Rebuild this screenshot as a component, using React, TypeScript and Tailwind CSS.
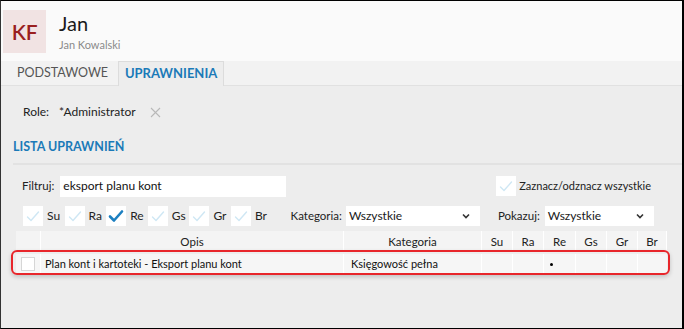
import React from "react";

const font = { fontFamily: 'Lato, "Noto Sans", sans-serif' };

function Check({ on }: { on?: boolean }) {
  return (
    <div className="w-[20px] h-[20px] bg-white flex items-center justify-center">
      <svg width="16" height="14" viewBox="0 0 16 14">
        <path
          d={on ? "M2 7.5 L6 11.5 L14 2.5" : "M2.5 8 L6 11.5 L13.5 3"}
          fill="none"
          stroke={on ? "#1c7fc0" : "#cfe7f4"}
          strokeWidth={on ? 2.6 : 1.4}
          strokeLinecap="round"
          strokeLinejoin="round"
        />
      </svg>
    </div>
  );
}

function Select({ w, value }: { w: string; value: string }) {
  return (
    <div className={`${w} h-[20px] bg-white flex items-center justify-between pl-[3px] pr-[10px] text-[12px] text-[#1a1a1a]`}>
      <span>{value}</span>
      <svg width="8" height="6" viewBox="0 0 8 6">
        <path d="M1 1.5 L4 4.5 L7 1.5" fill="none" stroke="#333" strokeWidth="1.6" />
      </svg>
    </div>
  );
}

const cols = "grid-cols-[25px_303px_138px_31px_31px_32px_31px_31px_29px]";

export default function App() {
  const perms = [
    { k: "Su", on: false },
    { k: "Ra", on: false },
    { k: "Re", on: true },
    { k: "Gs", on: false },
    { k: "Gr", on: false },
    { k: "Br", on: false },
  ];
  return (
    <div
      style={font}
      className="w-[684px] h-[329px] overflow-hidden border-t border-l border-b border-r-2 border-t-black border-b-black border-r-black border-l-[#333] bg-[#ededed] flex flex-col"
    >
      {/* Header */}
      <div className="h-[60px] bg-[#fafafa] flex items-start pl-[2px] pt-[9px] shrink-0">
        <div className="w-[43px] h-[43px] bg-[#f1e3e3] flex items-center justify-center text-[21px] text-[#9a1f1f] font-semibold tracking-[-0.3px]">
          KF
        </div>
        <div className="ml-[13px] flex flex-col">
          <div className="text-[20px] leading-[24px] text-[#1a1a1a] mt-[1px]">Jan</div>
          <div className="text-[11px] leading-[14px] text-[#8a8a8a] mt-[3px]">Jan Kowalski</div>
        </div>
      </div>

      {/* Tabs */}
      <div className="h-[25px] bg-[#f2f2f2] border-b border-[#e1e1e1] flex items-end pl-[5px] shrink-0">
        <div className="h-[24px] pl-[11px] pr-[10px] flex items-center text-[12.5px] text-[#555]">PODSTAWOWE</div>
        <div className="h-[25px] -mb-px w-[106px] justify-center bg-[#ededed] border border-b-0 border-[#dcdcdc] flex items-center text-[13px] font-bold text-[#1b7ab8]">
          UPRAWNIENIA
        </div>
      </div>

      {/* Role */}
      <div className="h-[52px] flex items-center pl-[22px] text-[12px] text-[#222] shrink-0">
        <span>Role:</span>
        <span className="ml-[10px]">*Administrator</span>
        <svg className="ml-[14px]" width="11" height="11" viewBox="0 0 11 11">
          <path d="M1 1 L10 10 M10 1 L1 10" stroke="#b8b8b8" strokeWidth="1.1" />
        </svg>
      </div>

      {/* Section title */}
      <div className="pl-[12px] text-[12.5px] font-bold text-[#1b7ab8] leading-[18px]">LISTA UPRAWNIEŃ</div>
      <div className="ml-[12px] mt-[7px] h-[2px] bg-[#e2e2e2]" />

      {/* Filter row */}
      <div className="mt-[10px] h-[22px] flex items-center pl-[21px] pr-[31px] text-[11px] text-[#222]">
        <span className="text-[11.5px]">Filtruj:</span>
        <div className="ml-[6px] w-[226px] h-[21px] bg-white flex items-center pl-[3px] text-[12px] text-[#111]">eksport planu kont</div>
        <div className="ml-auto flex items-center">
          <Check />
          <span className="ml-[3px] text-[11px]">Zaznacz/odznacz wszystkie</span>
        </div>
      </div>

      {/* Checkbox row */}
      <div className="mt-[8px] h-[21px] flex items-center pl-[22px] text-[12px] text-[#222]">
        {perms.map((p) => (
          <div key={p.k} className="flex items-center w-[41.6px]">
            <Check on={p.on} />
            <span className="ml-[4px]">{p.k}</span>
          </div>
        ))}
        <span className="ml-[18px] text-[11.5px]">Kategoria:</span>
        <div className="ml-[4px]">
          <Select w="w-[134px]" value="Wszystkie" />
        </div>
        <span className="ml-[18px] text-[11.5px]">Pokazuj:</span>
        <div className="ml-[5px]">
          <Select w="w-[109px]" value="Wszystkie" />
        </div>
      </div>

      {/* Table */}
      <div className="mt-[5px] ml-[15px] relative">
        <div className={`grid ${cols} h-[21px] text-[11.5px] text-[#222]`}>
          {["", "Opis", "Kategoria", "Su", "Ra", "Re", "Gs", "Gr", "Br"].map((h, i) => (
            <div key={i} className="bg-[#f4f4f4] border-r border-white flex items-center justify-center">
              {h}
            </div>
          ))}
        </div>
        <div className={`grid ${cols} h-[20px] mt-[2px] text-[11px] text-[#111]`}>
          <div className="bg-[#f6f6f6] border-r border-white flex items-center justify-center">
            <div className="w-[14px] h-[14px] bg-white border border-[#d6d6d6]" />
          </div>
          <div className="bg-[#f6f6f6] border-r border-white flex items-center pl-[4px]">Plan kont i kartoteki - Eksport planu kont</div>
          <div className="bg-[#f6f6f6] border-r border-white flex items-center pl-[7px]">Księgowość pełna</div>
          <div className="bg-[#f6f6f6] border-r border-white" />
          <div className="bg-[#f6f6f6] border-r border-white" />
          <div className="bg-[#f6f6f6] border-r border-white flex items-center pl-[6px]">
            <div className="w-[3px] h-[3px] bg-black rounded-full" />
          </div>
          <div className="bg-[#f6f6f6] border-r border-white" />
          <div className="bg-[#f6f6f6] border-r border-white" />
          <div className="bg-[#f6f6f6]" />
        </div>
        <div className="absolute left-[-5px] top-[19px] w-[659px] h-[25px] border-2 border-[#e8262b] rounded-[6px] shadow-[0_2px_4px_rgba(0,0,0,0.18)] pointer-events-none" />
      </div>
    </div>
  );
}
